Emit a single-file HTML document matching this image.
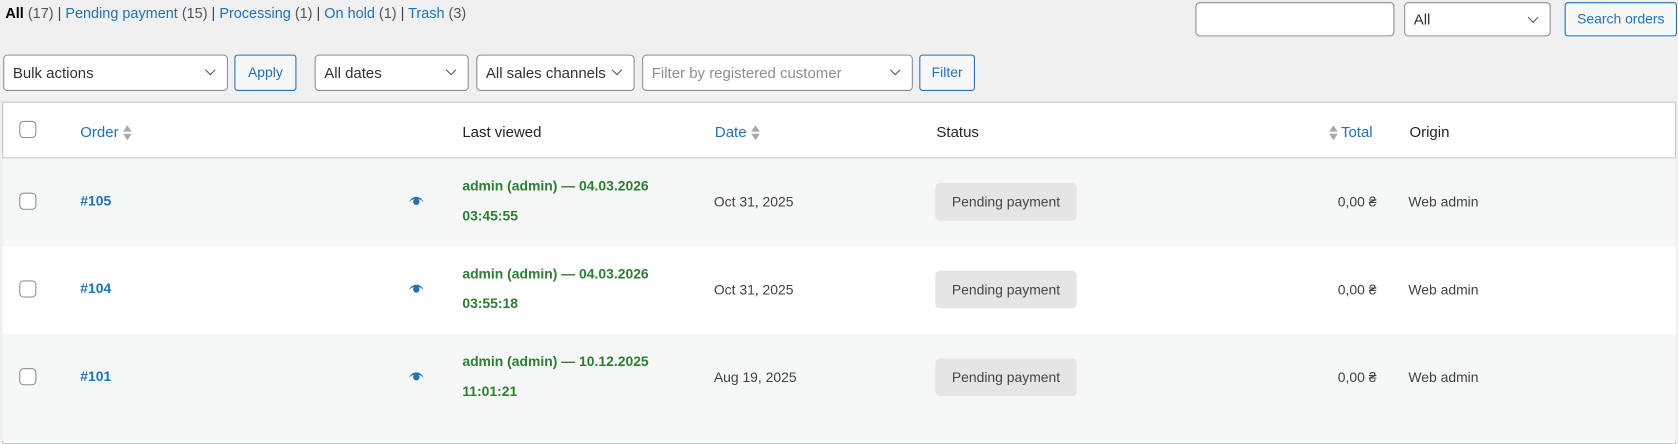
<!DOCTYPE html>
<html><head><style>
body{margin:0;width:1678px;height:402px;background:#f0f0f1;font-family:"Liberation Sans",sans-serif;font-size:13px;color:#3c434a;position:relative;overflow:hidden}
#w{position:absolute;left:0;top:0;width:1568px;height:376px;transform:scale(1.0702);transform-origin:0 0}
.a{position:absolute;white-space:nowrap}
a,.l{color:#2271b1;text-decoration:none}
.box{position:absolute;background:#fff;border:1px solid #8c8f94;border-radius:4px;box-sizing:border-box;font-size:14px;color:#2c3338;padding-left:8px;line-height:30px}
.sel::after{content:"";position:absolute;right:12px;top:10px;width:6px;height:6px;border-right:1.5px solid #50575e;border-bottom:1.5px solid #50575e;transform:rotate(45deg)}
.btn{position:absolute;background:#f6f7f7;border:1px solid #2271b1;border-radius:3px;box-sizing:border-box;color:#2271b1;font-size:13px;text-align:center;line-height:30px}
.cb{position:absolute;width:16px;height:16px;border:1px solid #8c8f94;border-radius:4px;background:#fff;box-sizing:border-box}
.row{position:absolute;left:2px;width:1564px;height:82px}
.g{color:#2e7d32;font-weight:bold;font-size:13px;line-height:28px}
.pill{position:absolute;background:#e5e5e5;border-radius:4px;color:#454545;width:132px;height:35px;line-height:35px;text-align:center;font-size:13px}
.sort{display:inline-block;vertical-align:middle;margin-left:4px;width:8px;height:14px;position:relative}
.sort::before{content:"";position:absolute;top:0;left:0;border-left:4px solid transparent;border-right:4px solid transparent;border-bottom:6px solid #a7aaad}
.sort::after{content:"";position:absolute;bottom:0;left:0;border-left:4px solid transparent;border-right:4px solid transparent;border-top:6px solid #a7aaad}
.eye{position:absolute;width:14px;height:10px}
</style></head><body><div id="w">
<div class="a" style="left:5px;top:5px;font-size:13.5px"><b style="color:#000">All</b> <span style="color:#50575e">(17)</span> | <a>Pending payment</a> <span style="color:#50575e">(15)</span> | <a>Processing</a> <span style="color:#50575e">(1)</span> | <a>On hold</a> <span style="color:#50575e">(1)</span> | <a>Trash</a> <span style="color:#50575e">(3)</span></div>

<div class="box" style="left:1117px;top:2px;width:186px;height:32px"></div>
<div class="box sel" style="left:1312px;top:2px;width:137px;height:32px">All</div>
<div class="btn" style="left:1462px;top:2px;width:105px;height:32px">Search orders</div>

<div class="box sel" style="left:3px;top:51px;width:210px;height:34px;line-height:32px">Bulk actions</div>
<div class="btn" style="left:219px;top:51px;width:58px;height:34px;line-height:32px">Apply</div>
<div class="box sel" style="left:294px;top:51px;width:144px;height:34px;line-height:32px">All dates</div>
<div class="box sel" style="left:445px;top:51px;width:148px;height:34px;line-height:32px;padding-right:20px">All sales channels</div>
<div class="box sel" style="left:600px;top:51px;width:253px;height:34px;line-height:32px;color:#8c8f94">Filter by registered customer</div>
<div class="btn" style="left:859px;top:51px;width:52px;height:34px;line-height:32px">Filter</div>

<div style="position:absolute;left:2px;top:95px;width:1564px;height:320px;background:#fff;border:1px solid #c3c4c7;box-sizing:border-box"></div>
<div style="position:absolute;left:3px;top:147px;width:1562px;height:1px;background:#c3c4c7"></div>
<div class="cb" style="left:18px;top:113px"></div>
<div class="a l" style="left:75px;top:115px;font-size:14px">Order<span class="sort"></span></div>
<div class="a" style="left:432px;top:115px;font-size:14px;color:#1d2327">Last viewed</div>
<div class="a l" style="left:668px;top:115px;font-size:14px">Date<span class="sort"></span></div>
<div class="a" style="left:875px;top:115px;font-size:14px;color:#1d2327">Status</div>
<div class="a l" style="left:1242px;top:115px;font-size:14px"><span class="sort" style="margin:0 3px 0 0"></span>Total</div>
<div class="a" style="left:1317px;top:115px;font-size:14px;color:#1d2327">Origin</div>

<div class="row" style="top:148px;background:#f6f7f7"></div>
<div class="row" style="top:230px;background:#fff"></div>
<div class="row" style="top:312px;background:#f6f7f7;height:100px"></div>

<div class="cb" style="left:18px;top:180px"></div>
<div class="a l" style="left:75px;top:180px;font-weight:bold">#105</div>
<svg class="eye" style="left:382px;top:183px" viewBox="0 0 14 10"><path d="M0 6C2 2 5 1 7 1s5 1 7 5C12 4 10 3 7 3S2 4 0 6z" fill="#2271b1"/><circle cx="7" cy="5.5" r="3" fill="#2271b1"/></svg>
<div class="a g" style="left:432px;top:160px">admin (admin) — 04.03.2026<br>03:45:55</div>
<div class="a" style="left:667px;top:181px">Oct 31, 2025</div>
<div class="pill" style="left:874px;top:171px">Pending payment</div>
<div class="a" style="left:1250px;top:181px">0,00 ₴</div>
<div class="a" style="left:1316px;top:181px">Web admin</div>

<div class="cb" style="left:18px;top:262px"></div>
<div class="a l" style="left:75px;top:262px;font-weight:bold">#104</div>
<svg class="eye" style="left:382px;top:265px" viewBox="0 0 14 10"><path d="M0 6C2 2 5 1 7 1s5 1 7 5C12 4 10 3 7 3S2 4 0 6z" fill="#2271b1"/><circle cx="7" cy="5.5" r="3" fill="#2271b1"/></svg>
<div class="a g" style="left:432px;top:242px">admin (admin) — 04.03.2026<br>03:55:18</div>
<div class="a" style="left:667px;top:263px">Oct 31, 2025</div>
<div class="pill" style="left:874px;top:253px">Pending payment</div>
<div class="a" style="left:1250px;top:263px">0,00 ₴</div>
<div class="a" style="left:1316px;top:263px">Web admin</div>

<div class="cb" style="left:18px;top:344px"></div>
<div class="a l" style="left:75px;top:344px;font-weight:bold">#101</div>
<svg class="eye" style="left:382px;top:347px" viewBox="0 0 14 10"><path d="M0 6C2 2 5 1 7 1s5 1 7 5C12 4 10 3 7 3S2 4 0 6z" fill="#2271b1"/><circle cx="7" cy="5.5" r="3" fill="#2271b1"/></svg>
<div class="a g" style="left:432px;top:324px">admin (admin) — 10.12.2025<br>11:01:21</div>
<div class="a" style="left:667px;top:345px">Aug 19, 2025</div>
<div class="pill" style="left:874px;top:335px">Pending payment</div>
<div class="a" style="left:1250px;top:345px">0,00 ₴</div>
<div class="a" style="left:1316px;top:345px">Web admin</div>
</div></body></html>
